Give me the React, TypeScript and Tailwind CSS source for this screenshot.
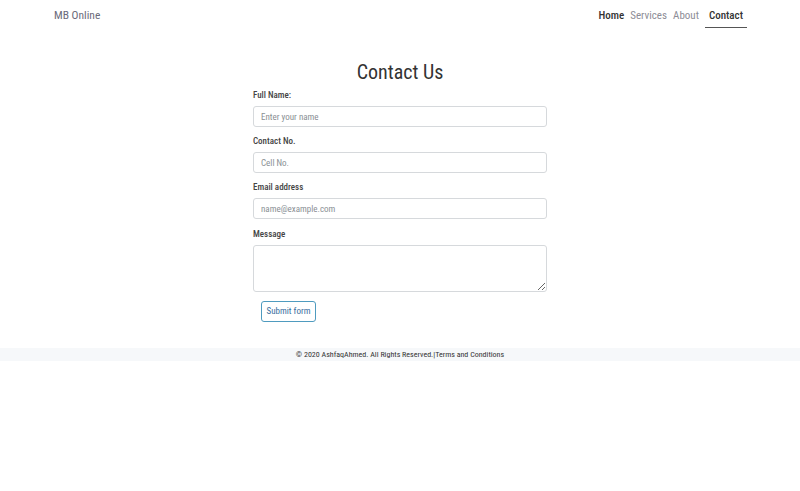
const fontStack = { fontFamily: '"Roboto Condensed", "Roboto", sans-serif' };

const Field = ({ label, placeholder }: { label: string; placeholder: string }) => (
  <div className="flex flex-col">
    <label className="text-[9px] leading-[12px] font-medium text-[#444] mb-[5px]">{label}</label>
    <input
      type="text"
      placeholder={placeholder}
      className="h-[21px] w-full rounded-[3px] border border-[#d6d9dc] bg-white px-[7px] text-[9px] text-[#495057] placeholder:text-[#8a8f94] focus:outline-none"
    />
  </div>
);

export default function App() {
  return (
    <div className="min-h-[491px] bg-white text-[#333]" style={fontStack}>
      <nav className="flex items-start justify-between px-[54px] h-[40px]">
        <span className="mt-[8px] text-[11.5px] leading-[15px] text-[#6b6b7b]">MB Online</span>
        <ul className="flex items-start gap-[6px] text-[11px] leading-[15px] mr-[-1px]">
          <li className="mt-[8px] font-medium text-[#333]">Home</li>
          <li className="mt-[8px] text-[#8d8d96]">Services</li>
          <li className="mt-[8px] text-[#8d8d96]">About</li>
          <li className="flex flex-col items-stretch">
            <span className="mt-[8px] px-[4px] font-medium text-[#333]">Contact</span>
            <span className="mt-[4px] h-px bg-[#555]" />
          </li>
        </ul>
      </nav>

      <main className="mx-auto w-[294px]">
        <h1 className="text-center text-[20px] leading-[26px] text-[#333] mt-[19px] mb-[4px]">Contact Us</h1>
        <form className="flex flex-col gap-[8px]">
          <Field label="Full Name:" placeholder="Enter your name" />
          <Field label="Contact No." placeholder="Cell No." />
          <Field label="Email address" placeholder="name@example.com" />
          <div className="flex flex-col mt-[1px]">
            <label className="text-[9px] leading-[12px] font-medium text-[#444] mb-[5px]">Message</label>
            <textarea className="h-[47px] w-full rounded-[3px] border border-[#d6d9dc] bg-white focus:outline-none" />
          </div>
          <div className="flex pl-[8px] mt-[1px]">
            <button
              type="button"
              className="h-[21px] w-[55px] rounded-[3px] border border-[#4f9bbf] bg-white text-[9px] text-[#3a6ea0]"
            >
              Submit form
            </button>
          </div>
        </form>
      </main>

      <footer className="mt-[26px] h-[13px] bg-[#f6f8fa] text-center text-[8px] leading-[13px] text-[#333]">
        © 2020 AshfaqAhmed. All Rights Reserved.|Terms and Conditions
      </footer>
    </div>
  );
}
